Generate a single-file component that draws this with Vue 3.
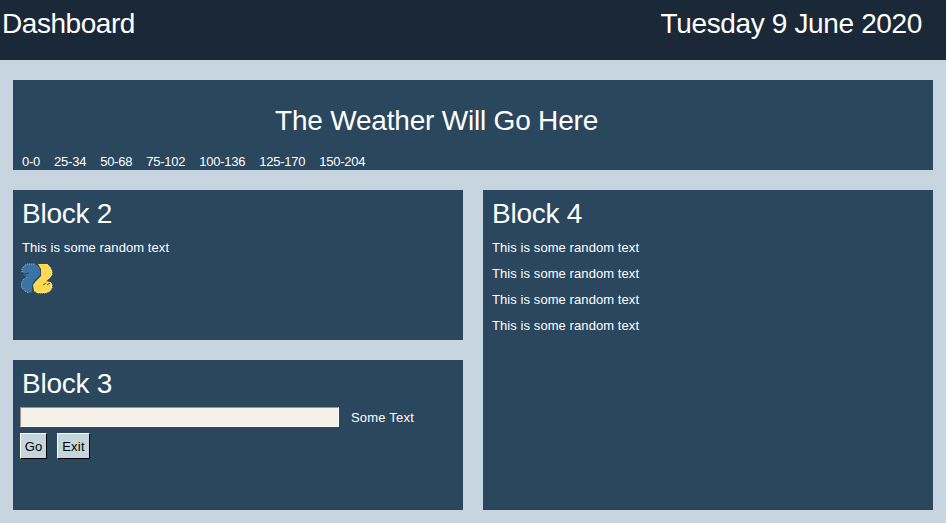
<script setup>
const sizes = ['0-0', '25-34', '50-68', '75-102', '100-136', '125-170', '150-204']
const line = 'This is some random text'
</script>

<template>
  <div class="window">
    <header class="topbar">
      <span class="name">Dashboard</span>
      <span class="date">Tuesday 9 June 2020</span>
    </header>
    <main class="board">
      <section class="block weather">
        <h1 class="heading">The Weather Will Go Here</h1>
        <div class="sizes">
          <span v-for="s in sizes" :key="s">{{ s }}</span>
        </div>
      </section>
      <section class="block">
        <h2 class="heading">Block 2</h2>
        <p class="text">{{ line }}</p>
        <svg class="logo" viewBox="0 0 32 32">
          <path fill="#3a73a6" d="M6 1H14L18 4L19 8V12L13 18L11 22V29L8 30L4 28L1 25L0 21L2 17L6 14L3 12L1 9V6L3 3Z" />
          <path fill="#ffda50" d="M17 1H26L29 4L31 8V12L29 15L25 18L29 19L31 21V25L29 28L25 30H16L13 28L12 22L15 18L20 13V6Z" />
          <path fill="none" stroke="#2c475d" d="M1 10L4 11L8 10M22 22L25 20M26 22L29 20" />
          <path fill="none" stroke="#9fc3dc" stroke-dasharray="1 1" d="M1 9V6L3 3L6 1H14M6 14L2 17L0 21L1 25L4 28L8 30" />
          <path fill="none" stroke="#fff0a8" stroke-dasharray="1 1" d="M26 1L29 4L31 8V12L25 18M29 19L31 21V25L29 28L25 30H16" />
        </svg>
      </section>
      <section class="block tall">
        <h2 class="heading">Block 4</h2>
        <p v-for="n in 4" :key="n" class="text">{{ line }}</p>
      </section>
      <section class="block">
        <h2 class="heading">Block 3</h2>
        <div class="entry">
          <input class="field" type="text" aria-label="Entry" />
          <span class="label">Some Text</span>
        </div>
        <div class="actions">
          <button class="btn go">Go</button>
          <button class="btn exit">Exit</button>
        </div>
      </section>
    </main>
  </div>
</template>

<style>
body { margin: 0; background: #c7d5e0; }
</style>

<style scoped>
.window {
  box-sizing: border-box;
  width: 946px;
  height: 523px;
  overflow: hidden;
  background: #c7d5e0;
  color: #fff;
  font: 13px/26px "Liberation Sans", Arial, sans-serif;
}
.topbar {
  box-sizing: border-box;
  display: flex;
  justify-content: space-between;
  height: 60px;
  padding: 8px 24px 0 2px;
  background: #1b2838;
  font-size: 28px;
  line-height: 31px;
}
.name { letter-spacing: -0.45px; }
.date { letter-spacing: -0.36px; }
.board {
  display: grid;
  grid-template-columns: 450px 450px;
  grid-template-rows: 90px 150px 150px;
  gap: 20px;
  padding: 20px 13px 13px;
}
.block {
  box-sizing: border-box;
  padding: 8px 9px 0;
  background: #2a475e;
}
.weather {
  grid-column: 1 / 3;
  padding-top: 25px;
}
.tall { grid-row: 2 / 4; grid-column: 2; }
.heading {
  margin: 0;
  font-size: 28px;
  line-height: 31px;
  font-weight: 400;
  letter-spacing: -0.25px;
}
.weather .heading {
  padding-left: 253px;
  letter-spacing: -0.2px;
}
.sizes {
  display: flex;
  gap: 14px;
  padding-top: 19px;
  line-height: 14px;
  letter-spacing: -0.24px;
}
.heading + .text { margin-top: 6px; }
.text {
  margin: 0;
  letter-spacing: 0.08px;
}
.logo {
  display: block;
  width: 32px;
  height: 32px;
  margin: 2px 0 0 -1px;
}
.entry {
  display: flex;
  align-items: center;
  gap: 12px;
  height: 20px;
  margin: 8px 0 0 -2px;
}
.label {
  padding-top: 2px;
  letter-spacing: 0.2px;
}
.field {
  box-sizing: border-box;
  width: 319px;
  height: 20px;
  padding: 0 3px;
  border: 1px solid;
  border-color: #99958e #fff #fff #99958e;
  border-radius: 0;
  outline: none;
  background: #f4efe7;
  font: inherit;
}
.actions {
  display: flex;
  gap: 10px;
  margin: 6px 0 0 -2px;
}
.btn {
  box-sizing: border-box;
  height: 26px;
  padding: 2px 0 0;
  border: 1px solid;
  border-color: #fff #000 #000 #fff;
  border-radius: 0;
  background: #c5d5db;
  color: #000;
  font: inherit;
  line-height: 22px;
}
.go { width: 27px; }
.exit {
  width: 33px;
  letter-spacing: 0.2px;
}
</style>
